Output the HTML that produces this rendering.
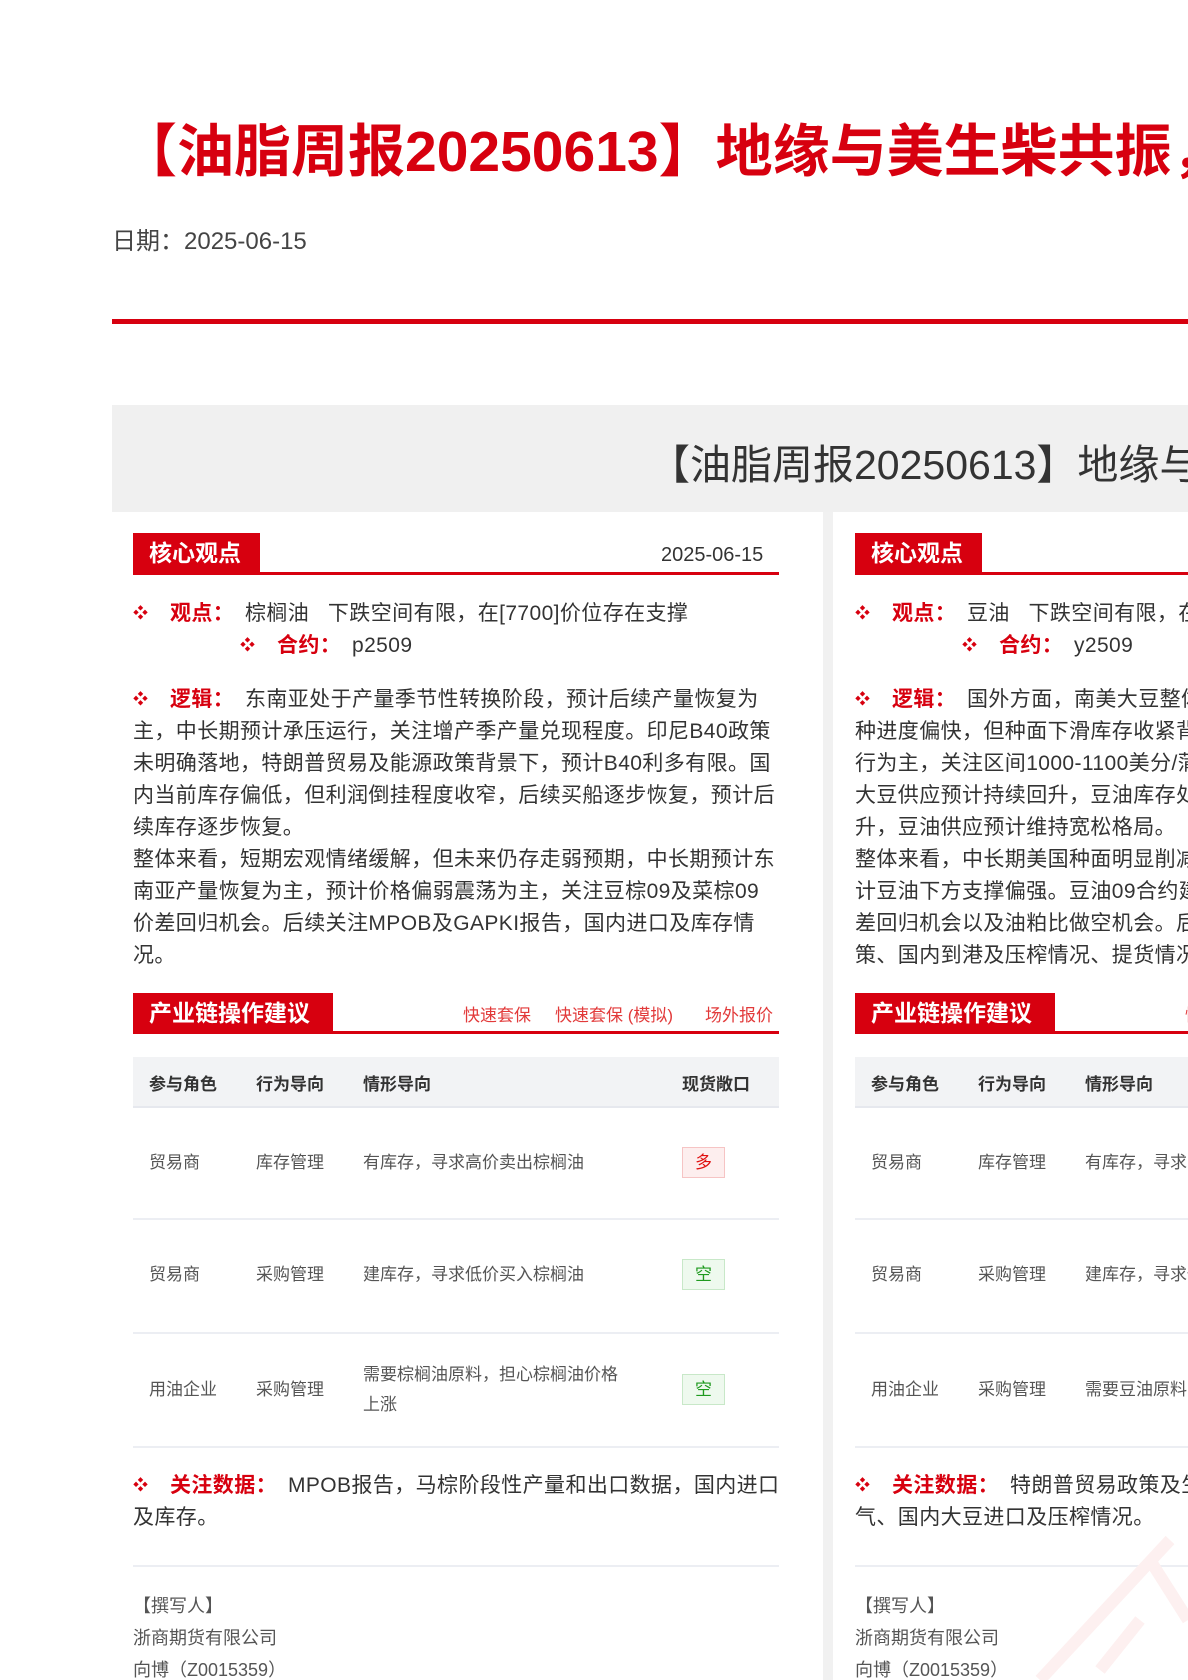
<!DOCTYPE html>
<html><head><meta charset="utf-8">
<style>
*{margin:0;padding:0;box-sizing:border-box}
html,body{width:1188px;height:1680px;overflow:hidden;background:#fff}
body{position:relative;font-family:"Liberation Sans","Noto Sans CJK SC",sans-serif;color:#333}
.abs{position:absolute;white-space:nowrap}
.title{left:120px;top:106px;font-size:57px;font-weight:bold;color:#d7000f;letter-spacing:0px}
.date{left:112px;top:221px;font-size:24px;color:#444}
.redline{left:112px;top:319px;width:1076px;height:5px;background:#d7000f}
.graybox{left:112px;top:405px;width:1076px;height:107px;background:#f0f0f0}
.gtitle{left:649px;top:431px;font-size:41px;color:#333}
.stripe{left:823px;top:512px;width:10px;height:1168px;background:#f1f1f1}
.col{position:absolute;top:0;width:646px;height:1680px}
.hdr{position:absolute;left:0;height:41px;background:#d7000f;color:#fff;font-size:23px;font-weight:bold;line-height:41px;padding-left:16px}
.hline{position:absolute;left:0;width:646px;height:3px;background:#d7000f}
.t{position:absolute;white-space:nowrap;font-size:21px;color:#333;line-height:32px;letter-spacing:0.4px}
.lbl{color:#d7000f;font-weight:bold}
.bul{position:absolute;color:#d7000f;font-size:15px;line-height:32px}
.lnk{position:absolute;font-size:17px;color:#e23a3a;top:1001px;white-space:nowrap}
.thead{position:absolute;left:0;top:1057px;width:646px;height:51px;background:#f2f3f5;border-bottom:2px solid #e6e8ee}
.th{position:absolute;top:1070px;font-size:17px;font-weight:bold;color:#333;white-space:nowrap}
.rl{position:absolute;left:0;width:646px;height:2px;background:#eceef3}
.td{position:absolute;font-size:17px;color:#555;white-space:nowrap;line-height:30px}
.tag{position:absolute;left:549px;width:43px;height:31px;font-size:17px;text-align:center;line-height:29px;border:1px solid}
.duo{color:#e01010;background:#fdeeee;border-color:#f6c4c4}
.kong{color:#1f9a1f;background:#eef9ee;border-color:#c8e8c8}
.foot{position:absolute;font-size:18px;color:#555;white-space:nowrap}
</style></head><body>
<div class="abs title">【油脂周报20250613】地缘与美生柴共振，油脂偏强运行</div>
<div class="abs date">日期：2025-06-15</div>
<div class="abs redline"></div>
<div class="abs graybox"></div>
<div class="abs gtitle">【油脂周报20250613】地缘与美生柴共振，油脂偏强运行</div>
<div class="abs stripe"></div>

<!-- column 1 -->
<div class="col" style="left:133px">
  <div class="hdr" style="top:533px;width:127px">核心观点</div>
  <div class="hline" style="top:572px"></div>
  <div class="t" style="left:528px;top:539px;font-size:20px;letter-spacing:0">2025-06-15</div>

  <div class="bul" style="left:0;top:598px">❖</div>
  <div class="t" style="left:37px;top:598px"><span class="lbl">观点：</span></div>
  <div class="t" style="left:112px;top:598px">棕榈油&nbsp;&nbsp;&nbsp;下跌空间有限，在[7700]价位存在支撑</div>
  <div class="bul" style="left:107px;top:630px">❖</div>
  <div class="t" style="left:144px;top:630px"><span class="lbl">合约：</span></div>
  <div class="t" style="left:219px;top:630px">p2509</div>

  <div class="bul" style="left:0;top:684px">❖</div>
  <div class="t" style="left:37px;top:684px"><span class="lbl">逻辑：</span></div>
  <div class="t" style="left:112px;top:684px">东南亚处于产量季节性转换阶段，预计后续产量恢复为</div>
  <div class="t" style="left:0;top:716px">主，中长期预计承压运行，关注增产季产量兑现程度。印尼B40政策</div>
  <div class="t" style="left:0;top:748px">未明确落地，特朗普贸易及能源政策背景下，预计B40利多有限。国</div>
  <div class="t" style="left:0;top:780px">内当前库存偏低，但利润倒挂程度收窄，后续买船逐步恢复，预计后</div>
  <div class="t" style="left:0;top:812px">续库存逐步恢复。</div>
  <div class="t" style="left:0;top:844px">整体来看，短期宏观情绪缓解，但未来仍存走弱预期，中长期预计东</div>
  <div class="t" style="left:0;top:876px">南亚产量恢复为主，预计价格偏弱震荡为主，关注豆棕09及菜棕09</div>
  <div class="t" style="left:0;top:908px">价差回归机会。后续关注MPOB及GAPKI报告，国内进口及库存情</div>
  <div class="t" style="left:0;top:940px">况。</div>

  <div class="hdr" style="top:993px;width:200px">产业链操作建议</div>
  <div class="hline" style="top:1031px"></div>
  <div class="lnk" style="left:330px">快速套保</div>
  <div class="lnk" style="left:422px">快速套保 (模拟)</div>
  <div class="lnk" style="left:572px">场外报价</div>

  <div class="thead"></div>
  <div class="th" style="left:16px">参与角色</div>
  <div class="th" style="left:123px">行为导向</div>
  <div class="th" style="left:230px">情形导向</div>
  <div class="th" style="left:549px">现货敞口</div>

  <div class="td" style="left:16px;top:1148px">贸易商</div>
  <div class="td" style="left:123px;top:1148px">库存管理</div>
  <div class="td" style="left:230px;top:1148px">有库存，寻求高价卖出棕榈油</div>
  <div class="tag duo" style="top:1147px">多</div>
  <div class="rl" style="top:1218px"></div>

  <div class="td" style="left:16px;top:1260px">贸易商</div>
  <div class="td" style="left:123px;top:1260px">采购管理</div>
  <div class="td" style="left:230px;top:1260px">建库存，寻求低价买入棕榈油</div>
  <div class="tag kong" style="top:1259px">空</div>
  <div class="rl" style="top:1332px"></div>

  <div class="td" style="left:16px;top:1375px">用油企业</div>
  <div class="td" style="left:123px;top:1375px">采购管理</div>
  <div class="td" style="left:230px;top:1360px">需要棕榈油原料，担心棕榈油价格</div>
  <div class="td" style="left:230px;top:1390px">上涨</div>
  <div class="tag kong" style="top:1374px">空</div>
  <div class="rl" style="top:1446px"></div>

  <div class="bul" style="left:0;top:1470px">❖</div>
  <div class="t" style="left:37px;top:1470px"><span class="lbl">关注数据：</span></div>
  <div class="t" style="left:155px;top:1470px">MPOB报告，马棕阶段性产量和出口数据，国内进口</div>
  <div class="t" style="left:0;top:1502px">及库存。</div>
  <div class="rl" style="top:1565px"></div>

  <div class="foot" style="left:0;top:1592px">【撰写人】</div>
  <div class="foot" style="left:0;top:1624px">浙商期货有限公司</div>
  <div class="foot" style="left:0;top:1656px">向博（Z0015359）</div>
</div>

<!-- column 2 -->
<div class="col" style="left:855px">
  <div class="hdr" style="top:533px;width:127px">核心观点</div>
  <div class="hline" style="top:572px"></div>

  <div class="bul" style="left:0;top:598px">❖</div>
  <div class="t" style="left:37px;top:598px"><span class="lbl">观点：</span></div>
  <div class="t" style="left:112px;top:598px">豆油&nbsp;&nbsp;&nbsp;下跌空间有限，在[7800]价位存在支撑</div>
  <div class="bul" style="left:107px;top:630px">❖</div>
  <div class="t" style="left:144px;top:630px"><span class="lbl">合约：</span></div>
  <div class="t" style="left:219px;top:630px">y2509</div>

  <div class="bul" style="left:0;top:684px">❖</div>
  <div class="t" style="left:37px;top:684px"><span class="lbl">逻辑：</span></div>
  <div class="t" style="left:112px;top:684px">国外方面，南美大豆整体供应宽松，美豆播</div>
  <div class="t" style="left:0;top:716px">种进度偏快，但种面下滑库存收紧背景下，预计美豆</div>
  <div class="t" style="left:0;top:748px">行为主，关注区间1000-1100美分/蒲式耳。国内方面，</div>
  <div class="t" style="left:0;top:780px">大豆供应预计持续回升，豆油库存处于低位并逐步回</div>
  <div class="t" style="left:0;top:812px">升，豆油供应预计维持宽松格局。</div>
  <div class="t" style="left:0;top:844px">整体来看，中长期美国种面明显削减，生柴政策利多，预</div>
  <div class="t" style="left:0;top:876px">计豆油下方支撑偏强。豆油09合约建议关注豆棕价</div>
  <div class="t" style="left:0;top:908px">差回归机会以及油粕比做空机会。后续关注美国生柴政</div>
  <div class="t" style="left:0;top:940px">策、国内到港及压榨情况、提货情况。</div>

  <div class="hdr" style="top:993px;width:200px">产业链操作建议</div>
  <div class="hline" style="top:1031px"></div>
  <div class="lnk" style="left:330px">快速套保</div>

  <div class="thead"></div>
  <div class="th" style="left:16px">参与角色</div>
  <div class="th" style="left:123px">行为导向</div>
  <div class="th" style="left:230px">情形导向</div>

  <div class="td" style="left:16px;top:1148px">贸易商</div>
  <div class="td" style="left:123px;top:1148px">库存管理</div>
  <div class="td" style="left:230px;top:1148px">有库存，寻求高价卖出豆油</div>
  <div class="rl" style="top:1218px"></div>
  <div class="td" style="left:16px;top:1260px">贸易商</div>
  <div class="td" style="left:123px;top:1260px">采购管理</div>
  <div class="td" style="left:230px;top:1260px">建库存，寻求低价买入豆油</div>
  <div class="rl" style="top:1332px"></div>
  <div class="td" style="left:16px;top:1375px">用油企业</div>
  <div class="td" style="left:123px;top:1375px">采购管理</div>
  <div class="td" style="left:230px;top:1375px">需要豆油原料，担心豆油价格上涨</div>
  <div class="rl" style="top:1446px"></div>

  <div class="bul" style="left:0;top:1470px">❖</div>
  <div class="t" style="left:37px;top:1470px"><span class="lbl">关注数据：</span></div>
  <div class="t" style="left:155px;top:1470px">特朗普贸易政策及生柴政策、美豆产区天</div>
  <div class="t" style="left:0;top:1502px">气、国内大豆进口及压榨情况。</div>
  <div class="rl" style="top:1565px"></div>

  <div class="foot" style="left:0;top:1592px">【撰写人】</div>
  <div class="foot" style="left:0;top:1624px">浙商期货有限公司</div>
  <div class="foot" style="left:0;top:1656px">向博（Z0015359）</div>
</div>

<svg class="abs" style="left:1000px;top:1500px" width="188" height="180">
  <path d="M40 180 L170 40 M150 60 L188 120 M100 170 L140 120" stroke="#fdf0f0" stroke-width="12" fill="none"/>
</svg>
</body></html>
